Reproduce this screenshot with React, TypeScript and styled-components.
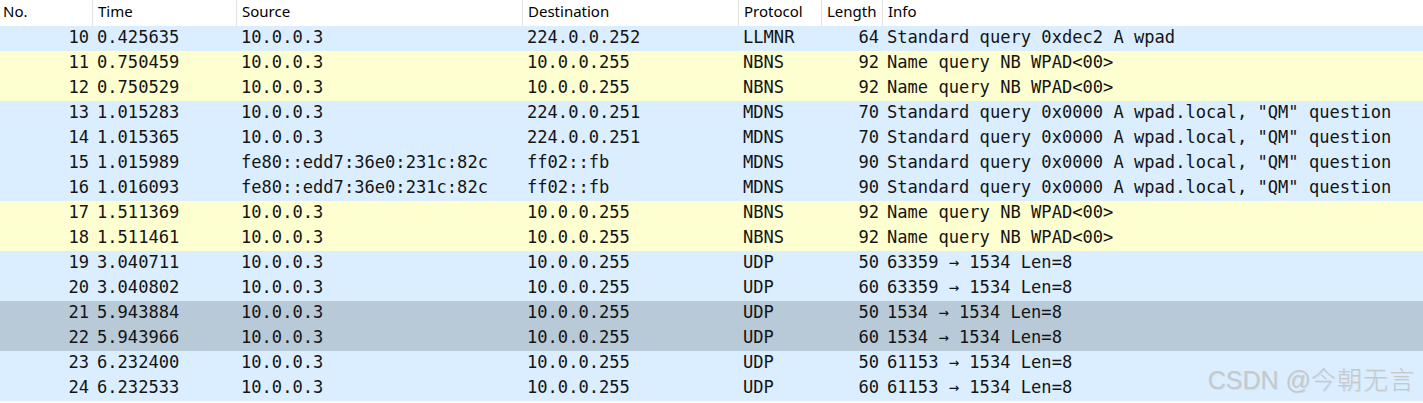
import React from "react";
import styled, { createGlobalStyle, css } from "styled-components";

const GlobalStyle = createGlobalStyle`
  html, body { margin: 0; padding: 0; background: #ffffff; }
  body { overflow: hidden; }
  #root { width: 1423px; height: 403px; position: relative; }
`;

const columns = css`
  display: grid;
  grid-template-columns: 93px 144px 286px 216px 83px 61px 1fr;
`;

type Tone = "blue" | "yellow" | "gray";

const toneBg: Record<Tone, string> = {
  blue: "#daeeff",
  yellow: "#feffd0",
  gray: "#b8c9d8",
};

const PacketList = styled.div`
  width: 1423px;
  height: 403px;
  display: flex;
  flex-direction: column;
  background: #ffffff;
`;

const HeaderRow = styled.div`
  ${columns};
  height: 26px;
  background: #ffffff;
  font-family: "Noto Sans", "Open Sans", sans-serif;
  font-size: 15px;
  line-height: 22px;
  color: #000000;
`;

const HeaderCell = styled.div<{ $first?: boolean }>`
  padding-left: ${(p) => (p.$first ? "3px" : "5px")};
  border-right: 1px solid #e2e2e2;
  white-space: nowrap;
  overflow: hidden;
  &:last-child { border-right: none; }
`;

const Row = styled.div<{ $tone: Tone }>`
  ${columns};
  height: 25px;
  background: ${(p) => toneBg[p.$tone]};
  font-family: "DejaVu Sans Mono", "Liberation Mono", monospace;
  font-size: 17.1px;
  line-height: 23px;
  color: #141414;
`;

const Cell = styled.div<{ $right?: boolean }>`
  padding: 0 4px;
  text-align: ${(p) => (p.$right ? "right" : "left")};
  white-space: pre;
  overflow: hidden;
`;

const Watermark = styled.div`
  position: absolute;
  right: 8px;
  bottom: 9px;
  font-family: "Liberation Sans", "Noto Sans CJK SC", sans-serif;
  font-size: 25px;
  line-height: 28px;
  font-weight: 400;
  color: #c6c8ca;
  text-shadow: 1px 1px 0 rgba(0, 0, 0, 0.07);
  white-space: nowrap;
  pointer-events: none;
`;

const CJK = styled.span`
  font-family: "Noto Sans CJK SC", sans-serif;
  font-weight: 300;
  letter-spacing: 1px;
`;

type Packet = {
  no: number;
  time: string;
  src: string;
  dst: string;
  proto: string;
  len: number;
  info: string;
  tone: Tone;
};

const mdns = 'Standard query 0x0000 A wpad.local, "QM" question';
const nbns = "Name query NB WPAD<00>";

const packets: Packet[] = [
  { no: 10, time: "0.425635", src: "10.0.0.3", dst: "224.0.0.252", proto: "LLMNR", len: 64, info: "Standard query 0xdec2 A wpad", tone: "blue" },
  { no: 11, time: "0.750459", src: "10.0.0.3", dst: "10.0.0.255", proto: "NBNS", len: 92, info: nbns, tone: "yellow" },
  { no: 12, time: "0.750529", src: "10.0.0.3", dst: "10.0.0.255", proto: "NBNS", len: 92, info: nbns, tone: "yellow" },
  { no: 13, time: "1.015283", src: "10.0.0.3", dst: "224.0.0.251", proto: "MDNS", len: 70, info: mdns, tone: "blue" },
  { no: 14, time: "1.015365", src: "10.0.0.3", dst: "224.0.0.251", proto: "MDNS", len: 70, info: mdns, tone: "blue" },
  { no: 15, time: "1.015989", src: "fe80::edd7:36e0:231c:82c", dst: "ff02::fb", proto: "MDNS", len: 90, info: mdns, tone: "blue" },
  { no: 16, time: "1.016093", src: "fe80::edd7:36e0:231c:82c", dst: "ff02::fb", proto: "MDNS", len: 90, info: mdns, tone: "blue" },
  { no: 17, time: "1.511369", src: "10.0.0.3", dst: "10.0.0.255", proto: "NBNS", len: 92, info: nbns, tone: "yellow" },
  { no: 18, time: "1.511461", src: "10.0.0.3", dst: "10.0.0.255", proto: "NBNS", len: 92, info: nbns, tone: "yellow" },
  { no: 19, time: "3.040711", src: "10.0.0.3", dst: "10.0.0.255", proto: "UDP", len: 50, info: "63359 → 1534 Len=8", tone: "blue" },
  { no: 20, time: "3.040802", src: "10.0.0.3", dst: "10.0.0.255", proto: "UDP", len: 60, info: "63359 → 1534 Len=8", tone: "blue" },
  { no: 21, time: "5.943884", src: "10.0.0.3", dst: "10.0.0.255", proto: "UDP", len: 50, info: "1534 → 1534 Len=8", tone: "gray" },
  { no: 22, time: "5.943966", src: "10.0.0.3", dst: "10.0.0.255", proto: "UDP", len: 60, info: "1534 → 1534 Len=8", tone: "gray" },
  { no: 23, time: "6.232400", src: "10.0.0.3", dst: "10.0.0.255", proto: "UDP", len: 50, info: "61153 → 1534 Len=8", tone: "blue" },
  { no: 24, time: "6.232533", src: "10.0.0.3", dst: "10.0.0.255", proto: "UDP", len: 60, info: "61153 → 1534 Len=8", tone: "blue" },
];

const headers = ["No.", "Time", "Source", "Destination", "Protocol", "Length", "Info"];

export default function App() {
  return (
    <>
      <GlobalStyle />
      <PacketList>
        <HeaderRow>
          {headers.map((h, i) => (
            <HeaderCell key={h} $first={i === 0}>
              {h}
            </HeaderCell>
          ))}
        </HeaderRow>
        {packets.map((p) => (
          <Row key={p.no} $tone={p.tone}>
            <Cell $right>{p.no}</Cell>
            <Cell>{p.time}</Cell>
            <Cell>{p.src}</Cell>
            <Cell>{p.dst}</Cell>
            <Cell>{p.proto}</Cell>
            <Cell $right>{p.len}</Cell>
            <Cell>{p.info}</Cell>
          </Row>
        ))}
      </PacketList>
      <Watermark>
        CSDN @<CJK>今朝无言</CJK>
      </Watermark>
    </>
  );
}
